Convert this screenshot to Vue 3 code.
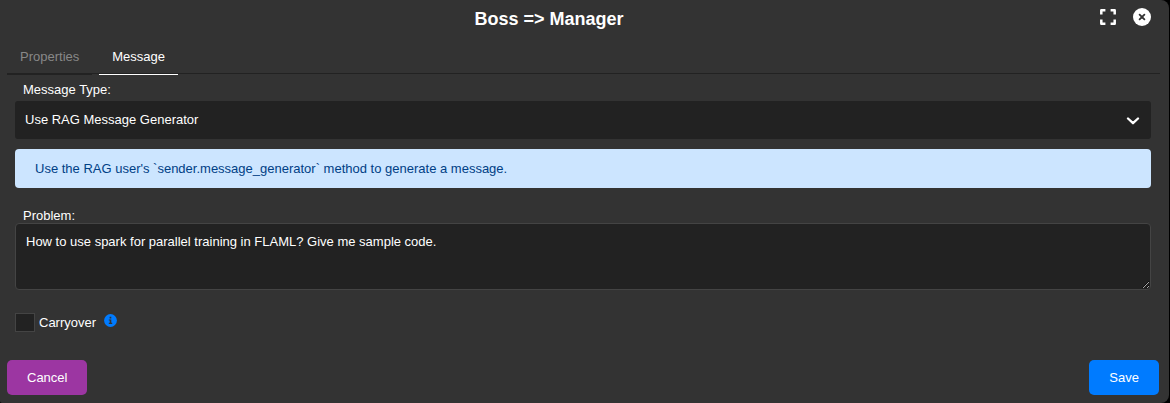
<script setup>
import { ref } from 'vue'

const tabs = ['Properties', 'Message']
const active = ref('Message')
const problem = ref('How to use spark for parallel training in FLAML? Give me sample code.')
</script>

<template>
  <div class="stage">
    <div class="dialog">
      <header class="header">
        <h1 class="title">Boss =&gt; Manager</h1>
        <div class="tools">
          <svg class="expand" viewBox="0 0 16 16" fill="none" stroke="#fff" stroke-width="2.5" stroke-linejoin="round">
            <path d="M1.3 5.4V1.3H5.4M10.6 1.3H14.7V5.4M14.7 10.6V14.7H10.6M5.4 14.7H1.3V10.6" />
          </svg>
          <svg class="close" viewBox="0 0 18 18">
            <circle cx="9" cy="9" r="9" fill="#fff" />
            <path d="M6.6 6.6L11.4 11.4M11.4 6.6L6.6 11.4" stroke="#333" stroke-width="1.8" stroke-linecap="round" />
          </svg>
        </div>
      </header>

      <nav class="tabs">
        <button
          v-for="tab in tabs"
          :key="tab"
          class="tab"
          :class="{ active: tab === active }"
          @click="active = tab"
        >{{ tab }}</button>
      </nav>

      <main class="body">
        <div class="label">Message Type:</div>
        <div class="select">
          <span>Use RAG Message Generator</span>
          <svg class="chevron" viewBox="0 0 14 8" fill="none" stroke="#fff" stroke-width="2.3" stroke-linecap="round" stroke-linejoin="round">
            <path d="M2 1.5L7 6.2L12 1.5" />
          </svg>
        </div>
        <div class="notice">Use the RAG user's `sender.message_generator` method to generate a message.</div>
        <div class="label problem-label">Problem:</div>
        <textarea v-model="problem" class="problem" spellcheck="false"></textarea>
        <div class="carry">
          <span class="checkbox"></span>
          <span class="carry-text">Carryover</span>
          <svg class="info" viewBox="0 0 13 13">
            <circle cx="6.5" cy="6.5" r="6.4" fill="#007bff" />
            <path d="M5.6 2.8H7.3V4.4H5.6ZM4.8 5.4H7.3V8.7H8.2V9.9H4.8V8.7H5.7V6.6H4.8Z" fill="#333" />
          </svg>
        </div>
      </main>

      <footer class="footer">
        <button class="btn cancel">Cancel</button>
        <button class="btn save">Save</button>
      </footer>
    </div>
  </div>
</template>

<style>
body {
  margin: 0;
  background: #000;
  overflow: hidden;
}
</style>

<style scoped>
.stage,
.stage * {
  box-sizing: border-box;
}
.stage {
  height: 403px;
  background: #000;
  font: 13px/15px "Liberation Sans", Arial, sans-serif;
  color: #fff;
}
.dialog {
  display: flex;
  flex-direction: column;
  width: 1169px;
  height: 403px;
  background: #333;
  border-radius: 0 8px 8px 2px;
}
.header {
  display: grid;
  grid-template-columns: 51px 1fr 51px;
  height: 38px;
  padding: 8px 18px 0 0;
}
.title {
  grid-column: 2;
  margin: 0 0 0 -53px;
  text-align: center;
  font-size: 18px;
  line-height: 22px;
  font-weight: 700;
}
.tools {
  display: flex;
  justify-content: flex-end;
  gap: 17px;
}
.expand {
  width: 16px;
  height: 16px;
  margin-top: 1px;
}
.close {
  width: 18px;
  height: 18px;
}
.tabs {
  display: flex;
  gap: 7px;
  height: 36px;
  margin: 0 9px 0 7px;
  box-shadow: inset 0 -1px #222;
}
.tab {
  height: 37px;
  padding: 1px 13px 0;
  border: 0;
  border-bottom: 1px solid #222;
  background: none;
  font: inherit;
  color: #888;
}
.tab.active {
  border-bottom-color: #fff;
  color: #fff;
}
.body {
  display: flex;
  flex-direction: column;
  padding: 8px 18px 0 15px;
}
.label {
  height: 19px;
  padding-left: 8px;
}
.select {
  display: flex;
  align-items: center;
  justify-content: space-between;
  height: 38px;
  padding: 0 11px 2px 10px;
  border-radius: 3px;
  background: #222;
}
.chevron {
  width: 14px;
  height: 8px;
  margin-top: 4px;
}
.notice {
  height: 39px;
  margin-top: 10px;
  padding: 12px 20px;
  border-radius: 4px;
  background: #cce5ff;
  color: #004085;
}
.problem-label {
  height: 15px;
  margin-top: 20px;
}
.problem {
  display: block;
  width: 100%;
  height: 67px;
  padding: 10px;
  border: 1px solid #444;
  border-radius: 4px;
  outline: 0;
  background: #222;
  font: inherit;
  color: #fff;
  resize: vertical;
}
.carry {
  display: flex;
  align-items: center;
  height: 20px;
  margin-top: 22px;
}
.checkbox {
  width: 20px;
  height: 19px;
  border: 1px solid #444;
  background: #222;
}
.carry-text {
  margin-left: 4px;
}
.info {
  width: 13px;
  height: 13px;
  margin: -3px 0 0 8px;
}
.footer {
  display: flex;
  justify-content: space-between;
  margin-top: auto;
  padding: 0 10px 8px 7px;
}
.btn {
  height: 35px;
  padding: 0 20px;
  border: 0;
  border-radius: 5px;
  font: inherit;
  color: #fff;
}
.cancel {
  background: #9c36a2;
}
.save {
  background: #007bff;
}
</style>
